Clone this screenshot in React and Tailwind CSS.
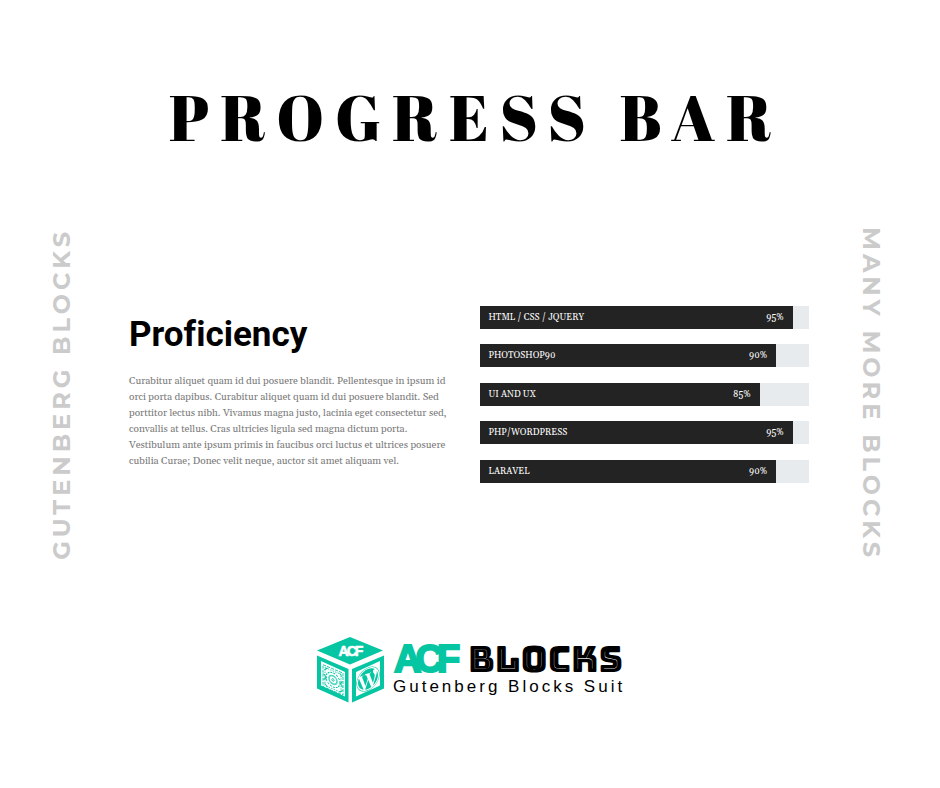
import { FaWordpress } from 'react-icons/fa';

const skills = [
  { label: 'HTML / CSS / JQUERY', value: 95 },
  { label: 'PHOTOSHOP90', value: 90 },
  { label: 'UI AND UX', value: 85 },
  { label: 'PHP/WORDPRESS', value: 95 },
  { label: 'LARAVEL', value: 90 },
];

const serif = "font-[Gelasio,Georgia,'Liberation_Serif',serif]";
const sideText =
  "font-[Montserrat,Inter,sans-serif] font-bold text-2xl leading-6 tracking-[4px] text-[#cbcbcb] whitespace-nowrap [writing-mode:vertical-rl]";

function SkillBar({ label, value }) {
  return (
    <div
      role="progressbar"
      aria-label={label}
      aria-valuenow={value}
      aria-valuemin={0}
      aria-valuemax={100}
      className="h-[23px] bg-[#e8ebee]"
    >
      <div
        className={`${serif} flex h-full items-center justify-between bg-[#232323] px-[9px] text-[9px] leading-none text-white`}
        style={{ width: `${value}%` }}
      >
        <span>{label}</span>
        <span>{value}%</span>
      </div>
    </div>
  );
}

function CubeIcon() {
  return (
    <svg viewBox="0 0 67 66" className="h-[66px] w-[67px] shrink-0" aria-hidden="true">
      <path d="M33 0 66 13.500 33 27.500 0 13.500Z" fill="#05c5a2" />
      <path d="M0 18.500 31.500 32V65.500L0 51.500Z M4 24V48.500L28 59.500V35Z" fill="#05c5a2" fillRule="evenodd" />
      <path d="M67 18.500 35 32V65.500L67 51.500Z M63 24V48.500L39 59.500V35Z" fill="#05c5a2" fillRule="evenodd" />
      <text x="33" y="18.500" textAnchor="middle" className="fill-white stroke-white font-['Liberation_Sans',sans-serif] text-[14px] font-bold tracking-[-2px]" strokeWidth="0.6">ACF</text>
      <g transform="matrix(1 .42 0 1 5.500 27)" fill="none" stroke="#05c5a2">
        <rect x="0.5" y="0.5" width="20" height="22" strokeWidth="0.8" strokeDasharray="3 1" />
        <rect x="2.500" y="2.500" width="16" height="18" strokeWidth="0.7" strokeDasharray="1.500 1" />
        <circle cx="10.500" cy="11.500" r="7" strokeWidth="1" strokeDasharray="2 1" />
        <circle cx="10.500" cy="11.500" r="4" strokeWidth="1.600" strokeOpacity="0.7" />
        <circle cx="10.500" cy="11.500" r="1.200" strokeWidth="0.8" />
        <path d="M2 5 5 2M17 2l3 3M2 18l3 3M20 18l-3 3M1 9l3 3-3 3M20 9l-2 3 2 3" strokeWidth="1" />
      </g>
      <g transform="translate(51 42) skewY(-22)">
        <FaWordpress x="-12" y="-12" size={24} color="#05c5a2" />
      </g>
    </svg>
  );
}

function Logo() {
  return (
    <div className="flex items-start gap-[9px] pl-0.5">
      <CubeIcon />
      <svg viewBox="0 0 232 66" className="h-[66px] w-[232px] overflow-visible" role="img" aria-label="ACF Blocks, Gutenberg Blocks Suit">
        <text x="1" y="35" className="fill-[#05c5a2] stroke-[#05c5a2] font-['Liberation_Sans',sans-serif] text-[38px] font-bold tracking-[-6px]" strokeWidth="2">ACF</text>
        <text x="75" y="35" className="fill-black font-['Bungee_Inline',Roboto,sans-serif] text-[37px]">BLOCKS</text>
        <text x="0" y="55" className="fill-black font-['Liberation_Sans',sans-serif] text-[17px] tracking-[3px]">Gutenberg Blocks Suit</text>
      </svg>
    </div>
  );
}

export default function App() {
  return (
    <main className="flex min-h-screen flex-col bg-white">
      <h1 className="pt-[77px] pl-3 text-center font-['Abril_Fatface','Liberation_Serif',serif] text-[64px] leading-[80px] font-normal tracking-[11px] whitespace-nowrap text-black">
        PROGRESS BAR
      </h1>
      <div className="mt-[70px] flex items-center justify-between pr-[57px] pl-[50px]">
        <p className={`${sideText} rotate-180`}>GUTENBERG BLOCKS</p>
        <section className="mr-[50px] ml-[55px] grid min-w-0 flex-1 grid-cols-2 items-center gap-[21px]">
          <div className="pb-1.5">
            <h2 className="font-[Roboto,sans-serif] text-[35px] leading-[44px] font-bold text-black [font-variant-ligatures:none]">Proficiency</h2>
            <p className={`${serif} mt-4 max-w-[324px] text-[10px] leading-4 text-[#7a7a7a]`}>
              Curabitur aliquet quam id dui posuere blandit. Pellentesque in ipsum id orci porta dapibus. Curabitur
              aliquet quam id dui posuere blandit. Sed porttitor lectus nibh. Vivamus magna justo, lacinia eget
              consectetur sed, convallis at tellus. Cras ultricies ligula sed magna dictum porta. Vestibulum ante
              ipsum primis in faucibus orci luctus et ultrices posuere cubilia Curae; Donec velit neque, auctor sit
              amet aliquam vel.
            </p>
          </div>
          <div className="flex h-[177px] flex-col justify-between">
            {skills.map((s) => (
              <SkillBar key={s.label} {...s} />
            ))}
          </div>
        </section>
        <p className={sideText}>MANY MORE BLOCKS</p>
      </div>
      <footer className="mt-[76px] flex justify-center">
        <Logo />
      </footer>
    </main>
  );
}
